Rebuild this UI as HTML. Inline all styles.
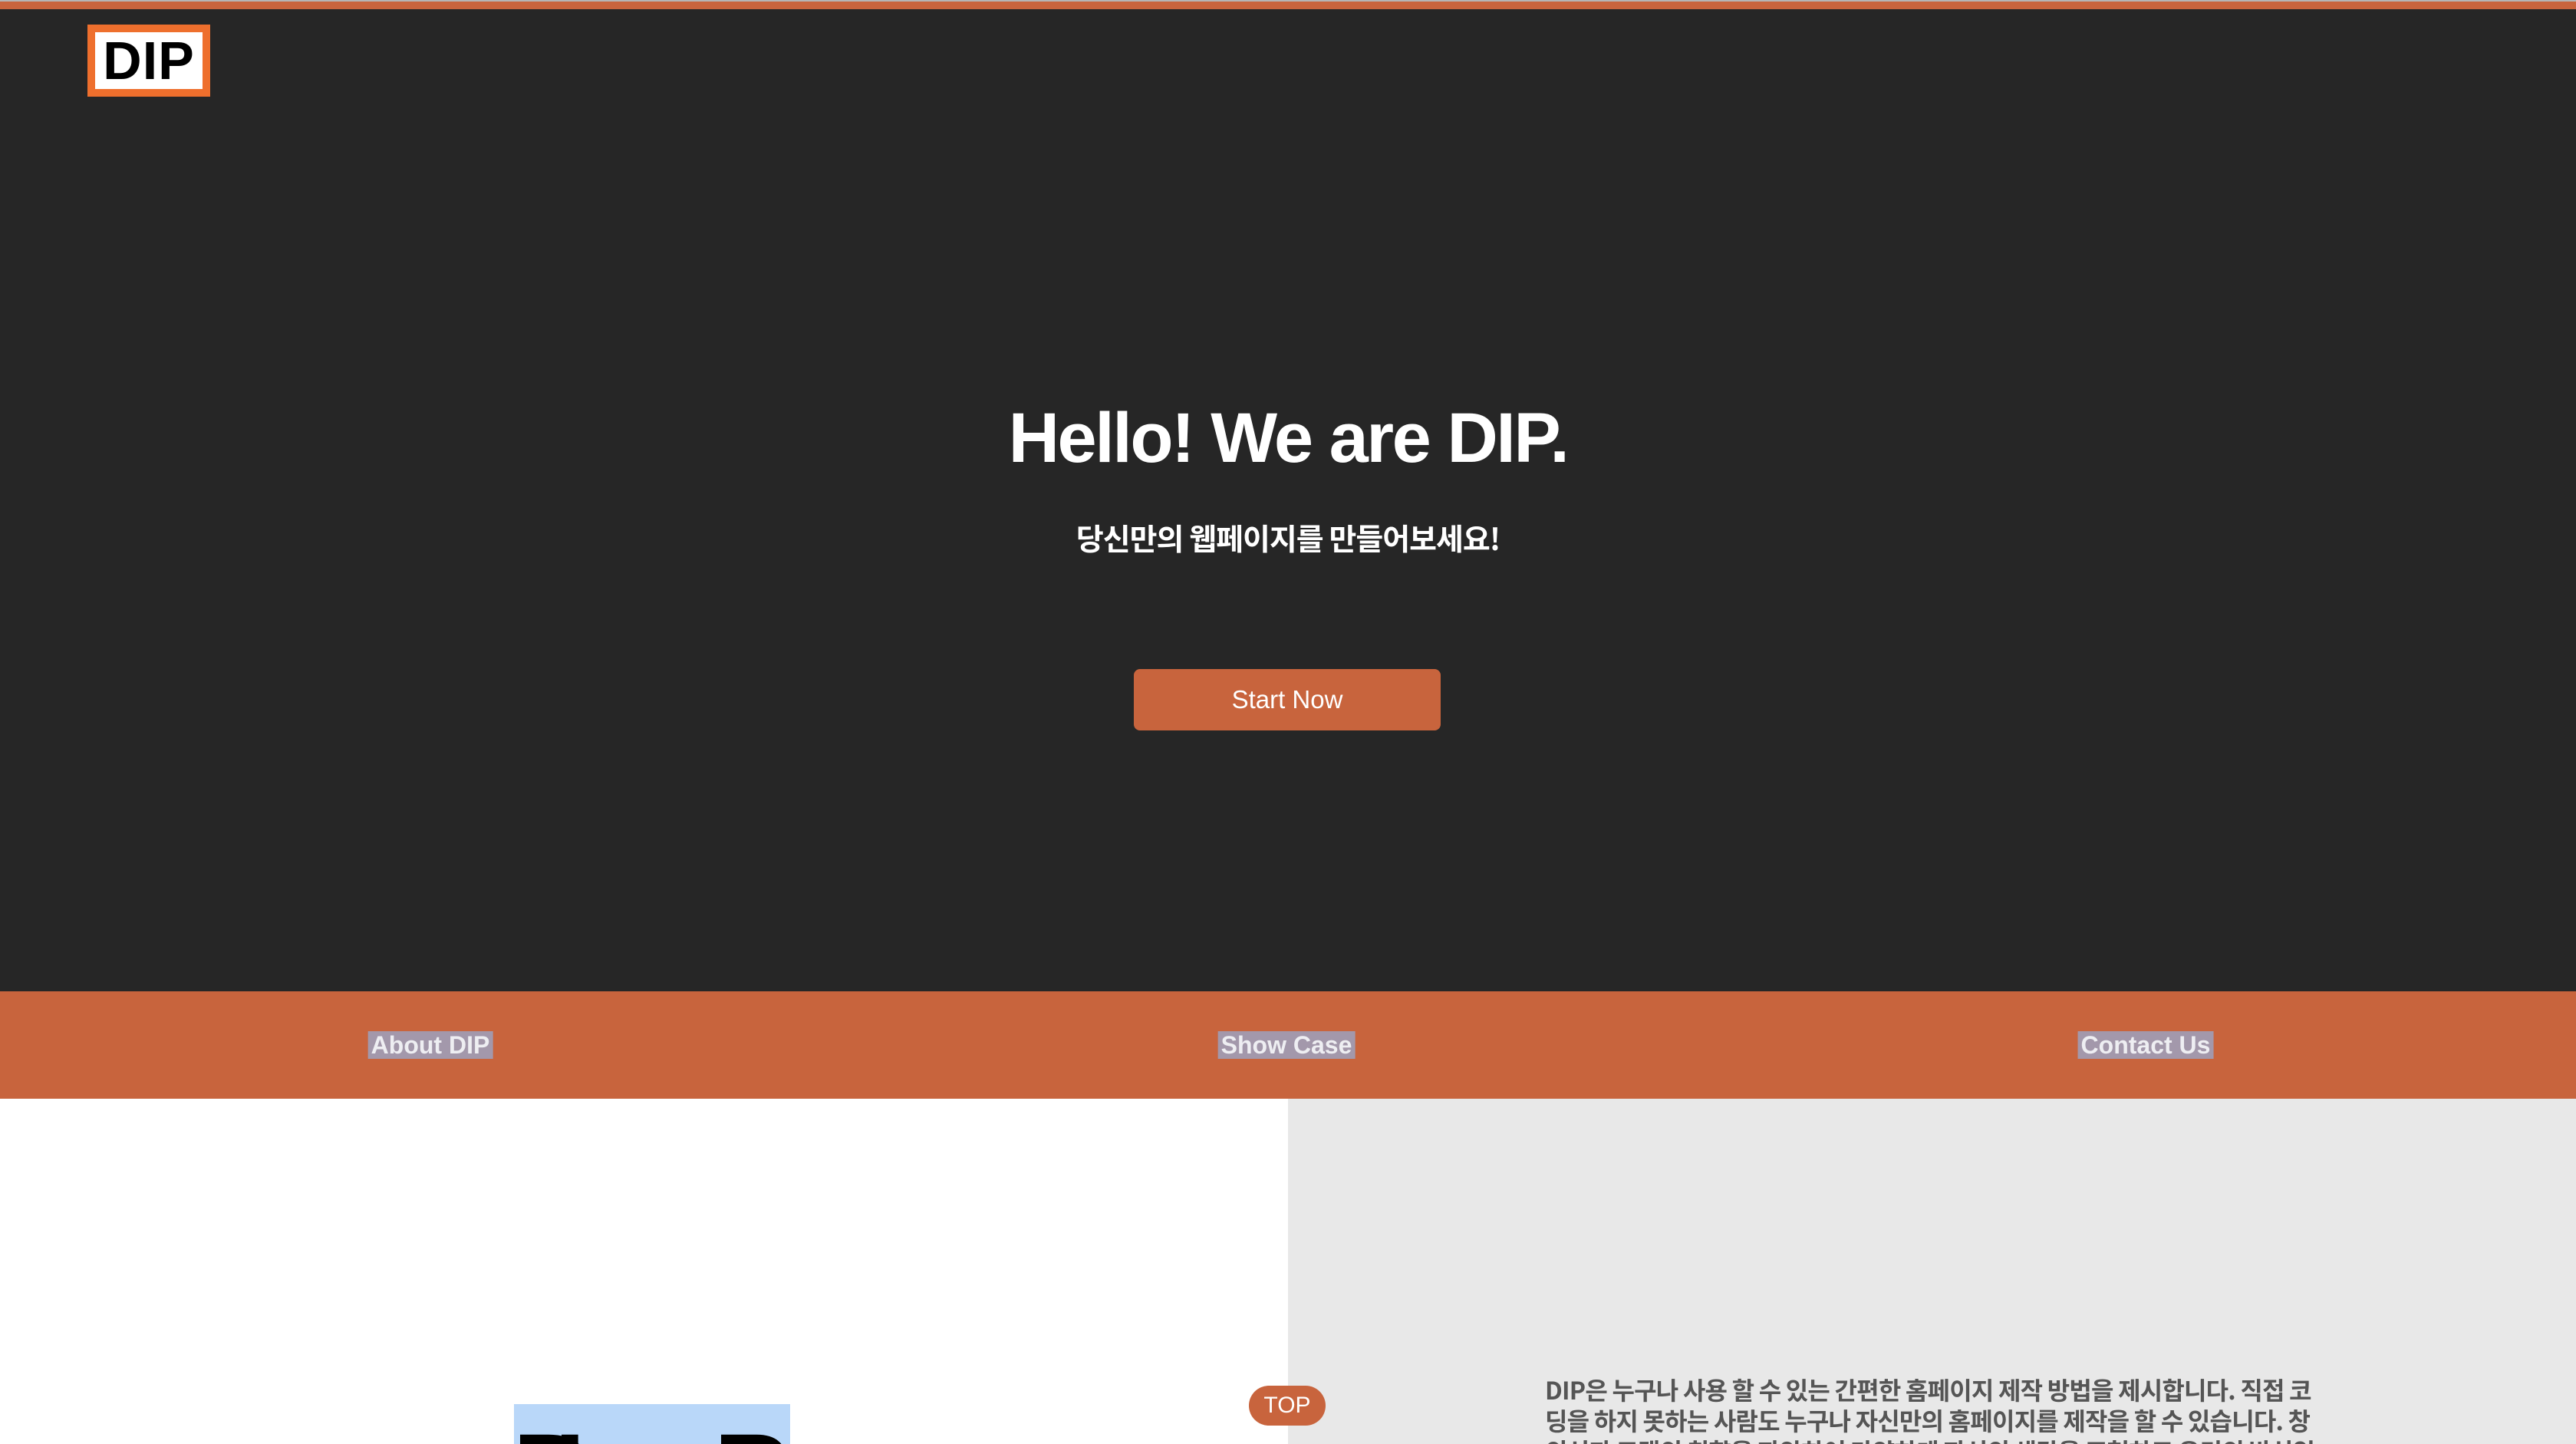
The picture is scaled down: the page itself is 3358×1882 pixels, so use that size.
<!DOCTYPE html>
<html><head><meta charset="utf-8"><style>
*{margin:0;padding:0;box-sizing:border-box}
html,body{width:3358px;height:1882px;overflow:hidden;background:#fff;font-family:"Liberation Sans","Noto Sans CJK KR",sans-serif}
.wrap{position:relative;width:3358px;height:1882px;overflow:hidden}
.hero{position:absolute;left:0;top:0;width:3358px;height:1292px;background:#262626}
.topbar{position:absolute;left:0;top:0;width:3358px;height:12px;background:#c8643d;border-top:2px solid #b5b5b5}
.logo{position:absolute;left:114px;top:32px;width:160px;height:94px;border:10px solid #ee6f2d;background:#fff;font-weight:bold;font-size:70px;line-height:74px;text-align:center;color:#000;letter-spacing:1px}
h1{position:absolute;left:0;width:3358px;top:516px;text-align:center;color:#fff;font-size:92px;font-weight:bold;letter-spacing:-2.5px;line-height:110px}
.sub{position:absolute;left:0;width:3358px;top:676px;text-align:center;color:#fff;font-size:39px;font-weight:bold;font-family:"Noto Sans CJK KR",sans-serif;line-height:50px;letter-spacing:-1px}
.btn{position:absolute;left:1478px;top:872px;width:400px;height:80px;background:#c8643d;border-radius:8px;color:#fff;font-size:33px;line-height:80px;text-align:center}
.nav{position:absolute;left:0;top:1292px;width:3358px;height:140px;background:#c8643d}
.nav span{position:absolute;top:52px;height:36px;line-height:36px;background:#a398ab;color:#eeeef2;font-weight:bold;font-size:32px;padding:0 4px;transform:translateX(-50%)}
.right{position:absolute;left:1679px;top:1432px;width:1679px;height:450px;background:#e8e8e8}
.para{position:absolute;left:2014px;top:1791px;width:1020px;color:#555;font-weight:bold;font-size:32px;line-height:40px;font-family:"Noto Sans CJK KR",sans-serif;letter-spacing:-0.8px;word-break:break-all}
.blue{position:absolute;left:670px;top:1830px;width:360px;height:60px;background:#b9d7f9}
.L{position:absolute;top:1846px;font-weight:bold;font-size:150px;line-height:150px;color:#000}
.top{position:absolute;left:1628px;top:1806px;width:100px;height:52px;border-radius:26px;background:#c8643d;color:#fff;font-size:30px;line-height:52px;text-align:center}
</style></head><body><div class="wrap">
<div class="hero"></div>
<div class="topbar"></div>
<div class="logo">DIP</div>
<h1>Hello! We are DIP.</h1>
<div class="sub">당신만의 웹페이지를 만들어보세요!</div>
<div class="btn">Start Now</div>
<div class="nav">
<span style="left:561px">About DIP</span>
<span style="left:1677px">Show Case</span>
<span style="left:2797px">Contact Us</span>
</div>
<div class="right"></div>
<div class="para">DIP은 누구나 사용 할 수 있는 간편한 홈페이지 제작 방법을 제시합니다. 직접 코딩을 하지 못하는 사람도 누구나 자신만의 홈페이지를 제작을 할 수 있습니다. 창의성과 고객의 취향을 파악하여 다양하게 자신의 생각을 표현하고 우리의 방식입니다.</div>
<div class="blue"></div>
<div class="L" style="left:668px">D</div>
<div class="L" style="left:722px">I</div>
<div class="L" style="left:930px">P</div>
<div class="top">TOP</div>
</div></body></html>
